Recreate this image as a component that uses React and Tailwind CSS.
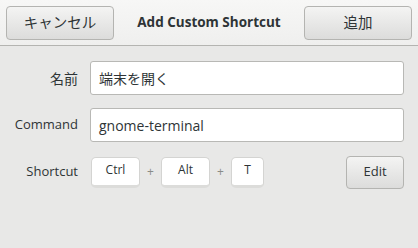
export default function App() {
  const font = { fontFamily: '"Open Sans", "Noto Sans CJK JP", sans-serif' }
  return (
    <div className="w-[418px] h-[248px] bg-[#e8e8e7] text-[#2e3436] text-[13px]" style={font}>
      <div className="h-[46px] flex items-center justify-between px-[6px] border-b border-[#b4b4b1] bg-gradient-to-b from-[#f7f7f6] to-[#efefee]">
        <button className="w-[108px] h-[34px] rounded-[4px] border border-[#b4b4b1] bg-gradient-to-b from-[#f4f4f3] to-[#dcdcdb] text-[14.5px] text-[#2e3436]">
          キャンセル
        </button>
        <div className="font-bold text-[13.5px]">Add Custom Shortcut</div>
        <button className="w-[108px] h-[34px] rounded-[4px] border border-[#b4b4b1] bg-gradient-to-b from-[#f4f4f3] to-[#dcdcdb] text-[14.5px] text-[#2e3436]">
          追加
        </button>
      </div>
      <div className="grid grid-cols-[64px_1fr] gap-x-[12px] gap-y-[13px] pl-[14px] pr-[14px] pt-[15px] items-center">
        <div className="text-right text-[14px]">名前</div>
        <div className="h-[34px] rounded-[3px] border border-[#b8b8b5] bg-white flex items-center px-[8px] text-[14px]">
          端末を開く
        </div>
        <div className="text-right">Command</div>
        <div className="h-[34px] rounded-[3px] border border-[#b8b8b5] bg-white flex items-center px-[8px] text-[14px]">
          gnome-terminal
        </div>
        <div className="text-right">Shortcut</div>
        <div className="flex items-center h-[34px]">
          <div className="w-[49px] h-[31px] rounded-[5px] border border-[#d4d4d2] border-b-[3px] border-b-[#dcdcda] bg-white flex items-center justify-center text-[12px] pb-[3px] ml-[1px]">
            Ctrl
          </div>
          <div className="w-[21px] text-center text-[#8a8c88] text-[12px]">+</div>
          <div className="w-[49px] h-[31px] rounded-[5px] border border-[#d4d4d2] border-b-[3px] border-b-[#dcdcda] bg-white flex items-center justify-center text-[12px] pb-[3px]">
            Alt
          </div>
          <div className="w-[21px] text-center text-[#8a8c88] text-[12px]">+</div>
          <div className="w-[33px] h-[31px] rounded-[5px] border border-[#d4d4d2] border-b-[3px] border-b-[#dcdcda] bg-white flex items-center justify-center text-[12px] pb-[3px]">
            T
          </div>
          <button className="ml-auto w-[58px] h-[33px] rounded-[4px] border border-[#b4b4b1] bg-gradient-to-b from-[#f4f4f3] to-[#dcdcdb] text-[13px] text-[#2e3436]">
            Edit
          </button>
        </div>
      </div>
    </div>
  )
}
